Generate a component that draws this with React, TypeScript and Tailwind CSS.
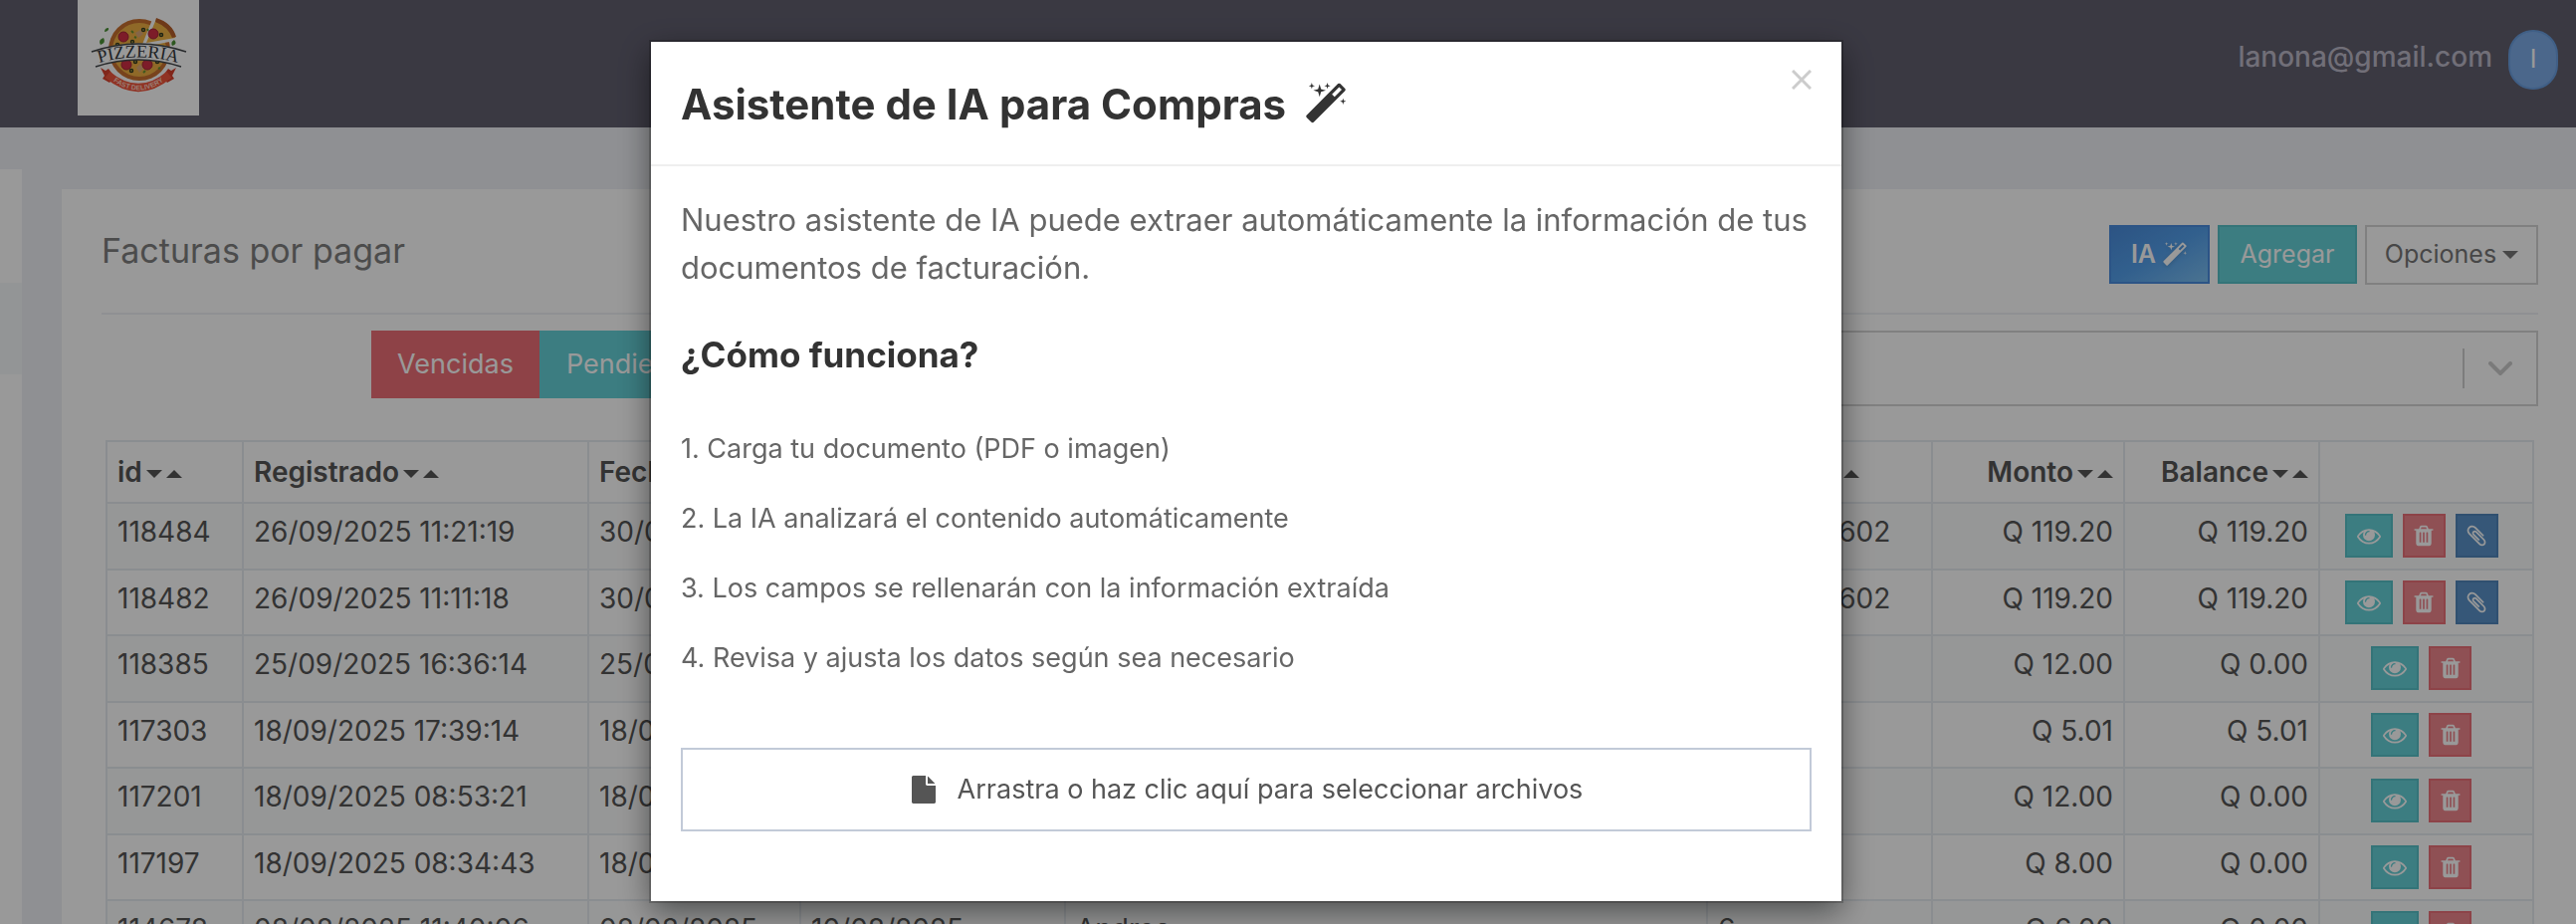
import { type ReactNode } from 'react';

interface Invoice {
  id: string;
  registered: string;
  invoiceDate: string;
  dueDate: string;
  supplier: string;
  number: string;
  amount: string;
  balance: string;
  hasAttachment?: boolean;
}

const invoices: Invoice[] = [
  { id: '118484', registered: '26/09/2025 11:21:19', invoiceDate: '30/09/2025', dueDate: '30/09/2025', supplier: '', number: '2509280602', amount: 'Q 119.20', balance: 'Q 119.20', hasAttachment: true },
  { id: '118482', registered: '26/09/2025 11:11:18', invoiceDate: '30/09/2025', dueDate: '30/09/2025', supplier: '', number: '2509280602', amount: 'Q 119.20', balance: 'Q 119.20', hasAttachment: true },
  { id: '118385', registered: '25/09/2025 16:36:14', invoiceDate: '25/09/2025', dueDate: '25/09/2025', supplier: '', number: '', amount: 'Q 12.00', balance: 'Q 0.00' },
  { id: '117303', registered: '18/09/2025 17:39:14', invoiceDate: '18/09/2025', dueDate: '18/09/2025', supplier: '', number: '', amount: 'Q 5.01', balance: 'Q 5.01' },
  { id: '117201', registered: '18/09/2025 08:53:21', invoiceDate: '18/09/2025', dueDate: '18/09/2025', supplier: '', number: '', amount: 'Q 12.00', balance: 'Q 0.00' },
  { id: '117197', registered: '18/09/2025 08:34:43', invoiceDate: '18/09/2025', dueDate: '18/09/2025', supplier: '', number: '', amount: 'Q 8.00', balance: 'Q 0.00' },
  { id: '114678', registered: '08/08/2025 11:40:06', invoiceDate: '08/08/2025', dueDate: '10/08/2025', supplier: 'Andres', number: '6', amount: 'Q 6.00', balance: 'Q 0.00' },
];

const steps = [
  '1. Carga tu documento (PDF o imagen)',
  '2. La IA analizará el contenido automáticamente',
  '3. Los campos se rellenarán con la información extraída',
  '4. Revisa y ajusta los datos según sea necesario',
];

const EYE = 'M1664 960q-152-236-381-353 61 104 61 225 0 185-131.5 316.5t-316.5 131.5-316.5-131.5-131.5-316.5q0-121 61-225-229 117-381 353 133 205 333.5 326.5t434.5 121.5 434.5-121.5 333.5-326.5zm-720-384q0-20-14-34t-34-14q-125 0-214.5 89.5t-89.5 214.5q0 20 14 34t34 14 34-14 14-34q0-86 61-147t147-61q20 0 34-14t14-34zm848 384q0 34-20 69-140 230-376.5 368.5t-499.5 138.5-499.5-139-376.5-368q-20-35-20-69t20-69q140-229 376.5-368t499.5-139 499.5 139 376.5 368q20 35 20 69z';
const TRASH = 'M704 1376v-704q0-14-9-23t-23-9h-64q-14 0-23 9t-9 23v704q0 14 9 23t23 9h64q14 0 23-9t9-23zm256 0v-704q0-14-9-23t-23-9h-64q-14 0-23 9t-9 23v704q0 14 9 23t23 9h64q14 0 23-9t9-23zm256 0v-704q0-14-9-23t-23-9h-64q-14 0-23 9t-9 23v704q0 14 9 23t23 9h64q14 0 23-9t9-23zm-544-992h448l-48-117q-7-9-17-11h-317q-10 2-17 11zm928 32v64q0 14-9 23t-23 9h-96v948q0 83-47 143.5t-113 60.5h-832q-66 0-113-58.5t-47-141.5v-952h-96q-14 0-23-9t-9-23v-64q0-14 9-23t23-9h309l70-167q15-37 54-63t79-26h320q40 0 79 26t54 63l70 167h309q14 0 23 9t9 23z';
const CLIP = 'M1596 1385q0 117-79 196t-196 79q-135 0-235-100l-777-776q-113-115-113-271 0-159 110-270t269-111q158 0 273 113l605 606q10 10 10 22 0 16-30.5 46.5t-46.5 30.5q-13 0-23-10l-606-607q-79-77-181-77-106 0-179 75t-73 181q0 105 76 181l776 777q63 63 145 63 64 0 106-42t42-106q0-82-63-145l-581-581q-26-24-60-24-29 0-48 19t-19 48q0 32 25 59l410 410q10 10 10 22 0 16-31 47t-47 31q-12 0-22-10l-410-410q-63-61-63-149 0-82 57-139t139-57q88 0 149 63l581 581q100 98 100 235z';
const MAGIC = 'M1254 581l293-293-107-107-293 293zm447-293q0 27-18 45l-1286 1286q-18 18-45 18t-45-18l-198-198q-18-18-18-45t18-45l1286-1286q18-18 45-18t45 18l198 198q18 18 18 45zm-1351-190l98 30-98 30-30 98-30-98-98-30 98-30 30-98zm350 162l196 60-196 60-60 196-60-196-196-60 196-60 60-196zm930 478l98 30-98 30-30 98-30-98-98-30 98-30 30-98zm-640-640l98 30-98 30-30 98-30-98-98-30 98-30 30-98z';
const FILE = 'M1152 512v-472q22 14 36 28l408 408q14 14 28 36h-472zm-128 32q0 40 28 68t68 28h544v1056q0 40-28 68t-68 28h-1344q-40 0-68-28t-28-68v-1600q0-40 28-68t68-28h800v544z';

function Glyph({ path, className }: { path: string; className: string }) {
  return (
    <svg viewBox="0 0 1792 1792" fill="currentColor" aria-hidden="true" className={className}>
      <path d={path} />
    </svg>
  );
}

function SortArrows() {
  return (
    <svg viewBox="0 0 36 10" fill="currentColor" aria-hidden="true" className="inline-block w-9 h-[10px] ml-1">
      <path d="M0 1h16l-8 8zM20 9h16l-8-8z" />
    </svg>
  );
}

function Logo() {
  return (
    <svg viewBox="0 0 122 116" role="img" aria-label="Pizzeria Fast Delivery" className="w-[122px] h-[116px] bg-white">
      <defs>
        <path id="logo-name" d="M13 66Q61 49 109 66" />
        <path id="logo-tagline" d="M30 77Q61 104 92 77" />
      </defs>
      <circle cx="62" cy="50" r="31" fill="#c8702f" />
      <circle cx="62" cy="50" r="27" fill="#eeb044" />
      <path d="M64 47L76 17l26 23-20 4z" fill="#fff" />
      <path d="M69 43L79 19q16 6 19 19z" fill="#f0b445" />
      <path d="M79 18q16 5 20 19l-4 1q-4-11-17-16z" fill="#b85f2a" />
      {[[46, 37], [49, 65], [70, 65], [76, 34]].map(([cx, cy]) => (
        <circle key={`${cx}-${cy}`} cx={cx} cy={cy} r="5" fill="#d02f45" stroke="#a32338" />
      ))}
      {[[66, 30], [84, 35], [40, 45], [55, 42], [58, 62], [80, 62], [54, 71]].map(([cx, cy]) => (
        <circle key={`${cx}-${cy}`} cx={cx} cy={cy} r="1.5" fill="#e7c850" stroke="#353b20" strokeWidth="1.5" />
      ))}
      <path d="M58 33l5-3 3 4-5 4zM59 68l4-4 3 5-4 4z" fill="#dca878" />
      <path d="M54 31l2 2M70 29l1 2M47 59l2 1M66 73l2-2M81 69l2-1M57 37l2 1" stroke="#679232" strokeWidth="2" />
      <path d="M23 45q-3-5 3-7 3 5-3 7zM27 32q0-4 4-4 1 3-4 4zM95 46q-2-4 2-6 4 4-2 6z" fill="#4c9136" />
      <path d="M14 52Q61 35 109 52L102 67Q60 53 18 67L21 62Z" fill="#fff" />
      <path d="M14 52Q61 36 109 52M18 67Q61 53 104 67" fill="none" stroke="#42464a" strokeWidth="1.5" />
      <text fontFamily="Liberation Serif, serif" fontSize="18" fontWeight="400" fill="#34383c">
        <textPath href="#logo-name" startOffset="50%" textAnchor="middle">PIZZERIA</textPath>
      </text>
      <path d="M23 68l5 3 3-2 6 8-5 6-7-4 2-3zM99 68l-5 3-3-2-6 8 5 6 7-4-2-3z" fill="#d8402c" />
      <path d="M30 75Q61 101 92 75" fill="none" stroke="#f0553c" strokeWidth="8" />
      <text fontFamily="Liberation Sans, sans-serif" fontSize="7" fontWeight="700" fill="#ffd1c1">
        <textPath href="#logo-tagline" startOffset="50%" textAnchor="middle">FAST DELIVERY</textPath>
      </text>
    </svg>
  );
}

function IconButton({ label, className, children }: { label: string; className: string; children: ReactNode }) {
  return (
    <button type="button" aria-label={label} className={`h-11 border-2 flex items-center justify-center text-white ${className}`}>
      {children}
    </button>
  );
}

function RowActions({ hasAttachment }: { hasAttachment?: boolean }) {
  return (
    <div className="flex justify-center gap-[10px] pr-[10px]">
      <IconButton label="Ver" className="w-12 bg-[#64d0d7] border-[#57c2c9]">
        <Glyph path={EYE} className="size-6" />
      </IconButton>
      <IconButton label="Eliminar" className="w-[43px] bg-[#ef868d] border-[#ec7079]">
        <Glyph path={TRASH} className="size-6" />
      </IconButton>
      {hasAttachment && (
        <IconButton label="Adjuntos" className="w-[43px] bg-[#5b92c8] border-[#5086bb]">
          <Glyph path={CLIP} className="size-6" />
        </IconButton>
      )}
    </div>
  );
}

function InvoiceTable() {
  const head = 'border-2 border-[#e7ecf1] px-[10px] h-[62px] font-semibold whitespace-nowrap';
  const cell = 'border-2 border-[#e7ecf1] px-[10px] pt-[10px] align-top whitespace-nowrap';
  return (
    <table className="w-full table-fixed border-collapse text-[28px] leading-9 text-[#555]">
      <colgroup>
        <col className="w-[137px]" />
        <col className="w-[347px]" />
        <col className="w-[213px]" />
        <col className="w-[266px]" />
        <col />
        <col className="w-[226px]" />
        <col className="w-[193px]" />
        <col className="w-[196px]" />
        <col className="w-[215px]" />
      </colgroup>
      <thead>
        <tr className="text-left">
          <th className={head}>id<SortArrows /></th>
          <th className={head}>Registrado<SortArrows /></th>
          <th className={head}>Fecha<SortArrows /></th>
          <th className={head}>Vence<SortArrows /></th>
          <th className={head}>Proveedor<SortArrows /></th>
          <th className={head}>Factura<SortArrows /></th>
          <th className={`${head} text-right`}>Monto<SortArrows /></th>
          <th className={`${head} text-right`}>Balance<SortArrows /></th>
          <th className={head} aria-label="Acciones" />
        </tr>
      </thead>
      <tbody>
        {invoices.map((invoice) => (
          <tr key={invoice.id} className="odd:h-[67px] even:h-[66px] odd:bg-[#fbfcfc]">
            <td className={cell}>{invoice.id}</td>
            <td className={cell}>{invoice.registered}</td>
            <td className={cell}>{invoice.invoiceDate}</td>
            <td className={cell}>{invoice.dueDate}</td>
            <td className={cell}>{invoice.supplier}</td>
            <td className={cell}>{invoice.number}</td>
            <td className={`${cell} text-right`}>{invoice.amount}</td>
            <td className={`${cell} text-right`}>{invoice.balance}</td>
            <td className={cell}><RowActions hasAttachment={invoice.hasAttachment} /></td>
          </tr>
        ))}
      </tbody>
    </table>
  );
}

function AssistantModal() {
  return (
    <div className="fixed inset-0 bg-black/40 flex items-start justify-center pt-[42px] pr-[84px]">
      <div role="dialog" aria-modal="true" aria-labelledby="assistant-title" className="w-full max-w-[1196px] bg-white shadow-[0_10px_30px_rgba(0,0,0,0.5),0_0_0_2px_rgba(0,0,0,0.2)]">
        <div className="flex items-start justify-between border-b-2 border-[#efefef] pl-[30px] pr-[30px] pt-7 pb-8">
          <h2 id="assistant-title" className="mt-[7px] flex items-center gap-[18px] text-[42px] leading-[56px] font-bold text-[#333]">
            Asistente de IA para Compras
            <Glyph path={MAGIC} className="size-11" />
          </h2>
          <button type="button" aria-label="Cerrar" className="text-[#ccc]">
            <svg viewBox="0 0 20 20" className="size-5" stroke="currentColor" strokeWidth="3" aria-hidden="true">
              <path d="M1 1l18 18M19 1L1 19" />
            </svg>
          </button>
        </div>
        <div className="px-[30px] pt-[30px] pb-[70px] text-[#666]">
          <p className="text-[31px] leading-12">
            Nuestro asistente de IA puede extraer automáticamente la información de tus documentos de facturación.
          </p>
          <h3 className="mt-[38px] text-[35px] leading-[50px] font-bold text-[#333]">¿Cómo funciona?</h3>
          <ol className="mt-[50px] space-y-[30px] text-[27px] leading-10">
            {steps.map((step) => <li key={step}>{step}</li>)}
          </ol>
          <label className="mt-[70px] w-full h-[84px] border-2 border-[#c2cad8] flex items-center justify-center gap-5 text-[27px] text-[#555] cursor-pointer">
            <input type="file" multiple accept="application/pdf,image/*" className="sr-only" />
            <Glyph path={FILE} className="size-7" />
            Arrastra o haz clic aquí para seleccionar archivos
          </label>
        </div>
      </div>
    </div>
  );
}

export default function App() {
  return (
    <div className="h-screen overflow-hidden bg-[#eef0f5] font-['Inter',sans-serif]">
      <header className="h-32 bg-[#615f6f] flex items-start justify-between pl-[78px] pr-[18px]">
        <Logo />
        <div className="flex items-center gap-4 pt-[30px]">
          <span className="pb-1.5 text-[28px] leading-9 font-medium text-[#bcb9c8]">lanona@gmail.com</span>
          <span className="w-[50px] h-[60px] rounded-full bg-[#7eace8] border-2 border-[#6b9fe0] flex items-center justify-center text-[25px] text-white">I</span>
        </div>
      </header>

      <div className="flex">
        <aside className="w-[22px] shrink-0 mt-[42px] flex flex-col">
          <div className="h-[114px] bg-white" />
          <div className="h-[92px] bg-[#f6f8fb]" />
          <div className="flex-1 bg-white" />
        </aside>

        <main className="flex-1 min-w-0 ml-10 mt-[62px] bg-white pl-10 pr-[38px]">
          <div className="flex items-start justify-between h-[126px] pt-9 border-b-2 border-[#eef1f5]">
            <h1 className="text-[34px] leading-[52px] text-[#7f7f7f]">Facturas por pagar</h1>
            <div className="flex gap-2 text-[25px]">
              <button type="button" className="w-[101px] h-[59px] flex items-center justify-center gap-1.5 border-2 border-[#4a8de0] bg-linear-to-br from-[#4a8cdc] via-[#54a0ec] to-[#7dc0f2] font-semibold text-white">
                IA
                <Glyph path={MAGIC} className="size-[26px] drop-shadow-sm" />
              </button>
              <button type="button" className="w-[140px] h-[59px] border-2 border-[#57c2c9] bg-[#64d0d7] text-white">Agregar</button>
              <button type="button" className="w-[174px] h-[60px] flex items-center justify-center gap-1.5 border-2 border-[#d5d5d5] text-[#777]">
                Opciones
                <svg viewBox="0 0 16 8" fill="currentColor" className="w-4 h-2" aria-hidden="true"><path d="M0 0h16l-8 8z" /></svg>
              </button>
            </div>
          </div>

          <div className="flex mt-4 pl-[271px] gap-10">
            <div className="flex h-[68px] text-[27px] text-white">
              <button type="button" className="w-[169px] bg-[#ed6f77]">Vencidas</button>
              <button type="button" className="w-[196px] bg-[#64d0d7]">Pendientes</button>
            </div>
            <div className="flex-1 h-[76px] border-2 border-[#d5d5d5] flex items-center">
              <select aria-label="Proveedor" className="flex-1 h-full appearance-none bg-transparent px-4" />
              <span className="w-[2px] h-10 bg-[#d0d0d0]" />
              <span className="w-[72px] flex justify-center text-[#ccc]">
                <svg viewBox="0 0 24 14" className="w-6 h-[14px]" fill="none" stroke="currentColor" strokeWidth="4" strokeLinecap="round" aria-hidden="true"><path d="M2 2l10 10L22 2" /></svg>
              </span>
            </div>
          </div>

          <div className="mt-[34px] ml-1 mr-1">
            <InvoiceTable />
          </div>
        </main>
      </div>

      <AssistantModal />
    </div>
  );
}
